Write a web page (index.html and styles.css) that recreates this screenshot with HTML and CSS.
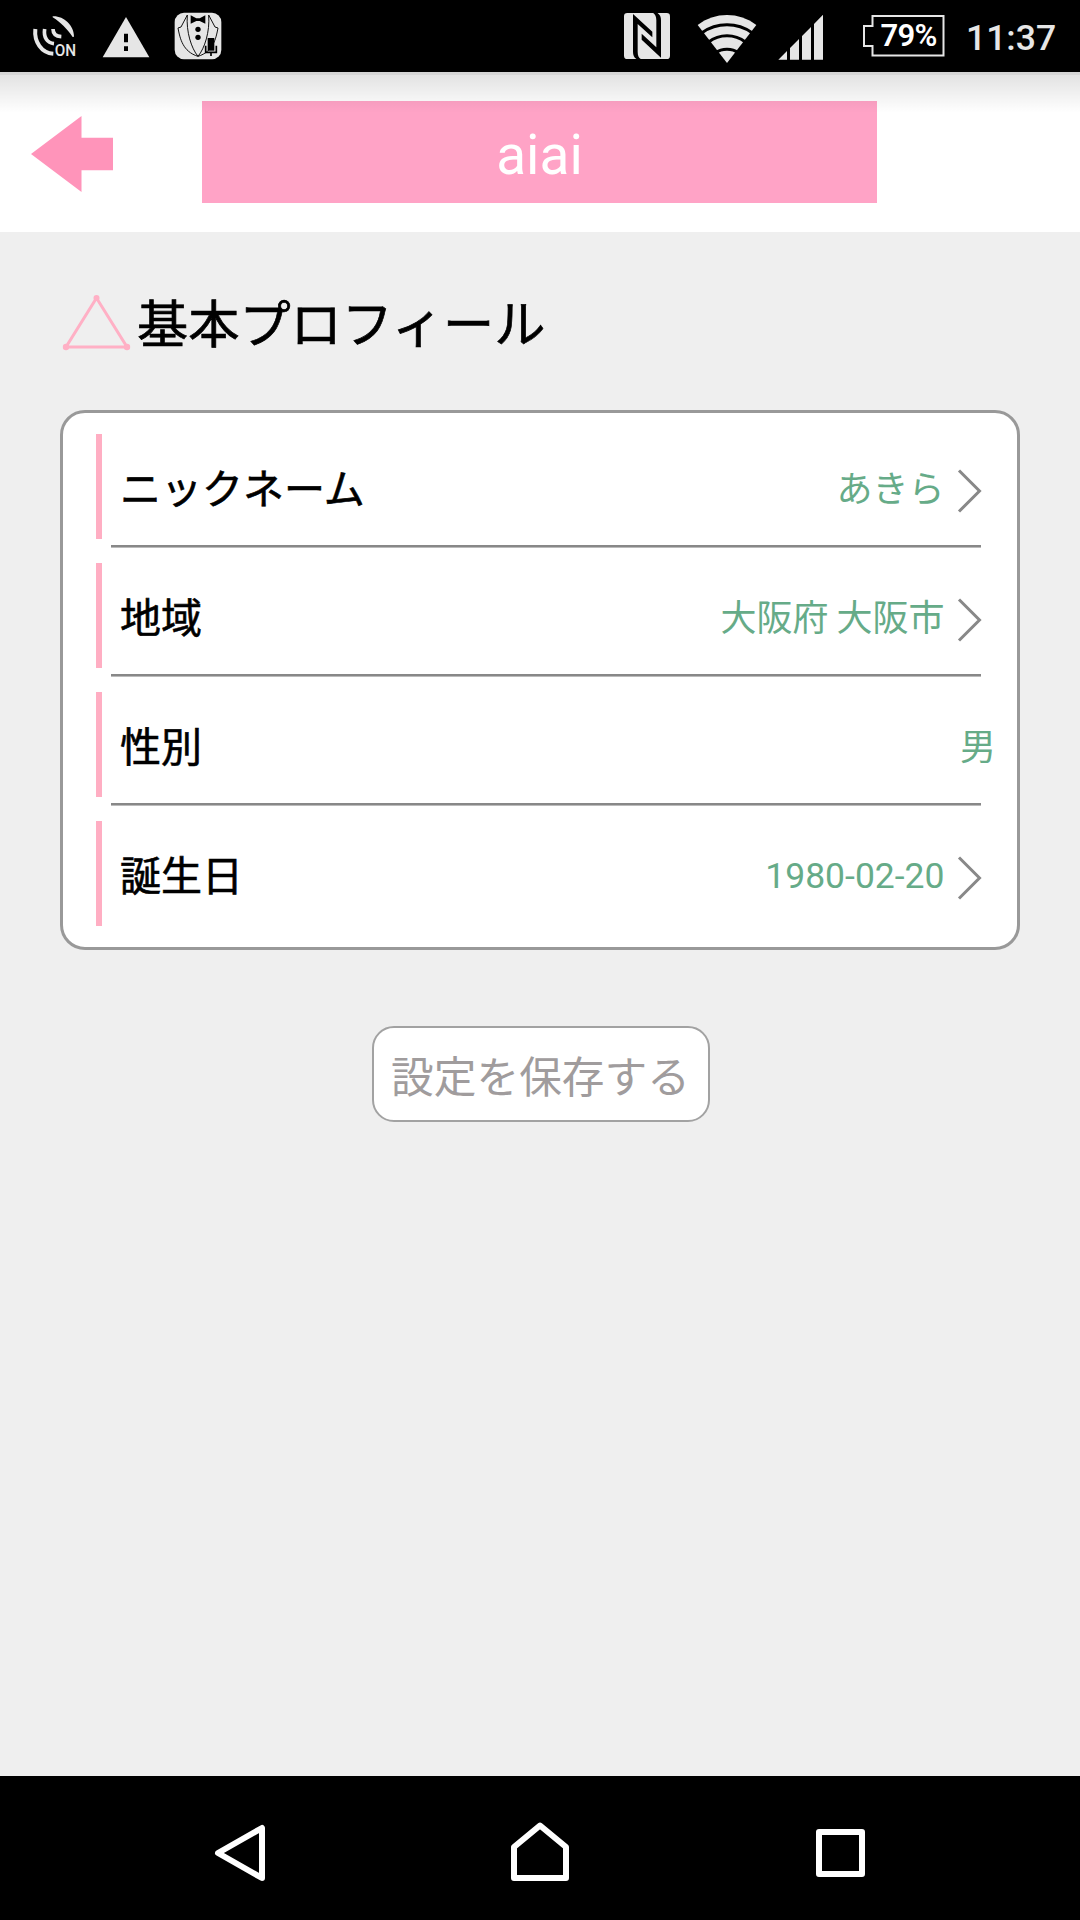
FILE: index.html
```html
<!DOCTYPE html>
<html lang="ja">
<head>
<meta charset="utf-8">
<title>基本プロフィール</title>
<link rel="stylesheet" href="styles.css">
</head>
<body>
<div class="statusbar">
  <div class="status-left">
    <svg class="icon-gps" width="48" height="48" viewBox="96 44 144 144">
      <path d="M158 48C190 46 222 74 222 109L218 110C200 84 184 68 158 51Z" fill="#e6e6e6"/>
      <g fill="none" stroke="#e6e6e6" stroke-width="11">
        <path d="M106 86C102 124 124 158 160 160" stroke-width="12"/>
        <path d="M134 86C130 112 142 128 162 130"/>
        <path d="M159 86C159 100 168 108 184 109"/>
      </g>
      <text class="gps-text" x="164" y="167" textLength="64" lengthAdjust="spacingAndGlyphs">ON</text>
    </svg>
    <svg class="icon-warn" width="48" height="42" viewBox="306 48 144 126">
      <path d="M378 51L448 172H308Z" fill="#e6e6e6"/>
      <path d="M372 101h12v26h-12zM372 139h12v14h-12z" fill="#000"/>
    </svg>
    <svg class="icon-tux" width="48" height="48" viewBox="522 36 144 144">
      <rect x="524" y="38" width="140" height="140" rx="28" fill="#e6e6e6"/>
      <g fill="none" stroke="#111" stroke-width="3">
        <path d="M562 45L543 81L534 84C540 115 548 155 594 169C640 155 648 115 654 84L645 81L626 45"/>
        <path d="M562 45C558 95 574 145 594 169C614 145 630 95 626 45"/>
      </g>
      <path d="M572 46L589 55H599L616 46V71L599 63H589L572 71Z" fill="#000"/>
      <circle cx="594" cy="88" r="8"/><circle cx="594" cy="112" r="8"/>
      <rect x="623" y="114" width="20" height="38"/>
      <path d="M617 137V157H649V137M633 157V168" fill="none" stroke="#000" stroke-width="5"/>
    </svg>
  </div>
  <div class="status-right">
    <svg class="icon-nfc" width="46" height="46" viewBox="27 24 138 138">
      <rect x="27" y="24" width="138" height="138" rx="10" fill="#e6e6e6"/>
      <path d="M54 27L112 80V97L68 57V140C68 153 72 159 79 163H66C57 158 54 150 54 140Z"/>
      <path d="M138 158L80 104V86L124 127V46C124 34 120 27 113 23H126C135 28 138 36 138 46Z"/>
    </svg>
    <svg class="icon-wifi" width="60" height="50" viewBox="291 42 180 150">
      <path d="M293 75C345 35 417 35 469 75L381 189Z" fill="#e6e6e6"/>
      <g fill="none" stroke="#000" stroke-width="9">
        <path d="M306 98C350 66 412 66 456 98"/>
        <path d="M326 126C358 101 404 101 436 126"/>
        <path d="M346 159C366 144 396 144 416 159"/>
      </g>
    </svg>
    <svg class="icon-signal" width="46" height="46" viewBox="534 43 138 138">
      <path d="M535 180L561 154V180ZM570 145L597 118V180H570ZM606 109L633 82V180H606ZM642 73L669 45V180H642Z" fill="#e6e6e6"/>
    </svg>
    <div class="battery">
      <svg width="82" height="42" viewBox="0 0 82 42">
        <path d="M9.500 1H80.500V40.500H9.500V31H1V11H9.500Z" fill="none" stroke="#e6e6e6" stroke-width="2"/>
      </svg>
      <span class="battery-text">79%</span>
    </div>
    <span class="clock">11:37</span>
  </div>
</div>

<header class="header">
  <svg class="back" width="86" height="80" viewBox="29 114 86 80">
    <path d="M31 154L81.500 116V137.700H113V170.300H81.500V192Z" fill="#ff94ba"/>
  </svg>
  <h1 class="title">aiai</h1>
</header>

<main class="main">
  <h2 class="section">
    <svg width="76" height="62" viewBox="61 289 76 62">
      <path d="M96.500 298L66 347H127Z" fill="none" stroke="#ffb0c5" stroke-width="3"/>
      <g fill="#ffb0c5"><circle cx="96.500" cy="298" r="3"/><circle cx="66" cy="347" r="3.200"/><circle cx="127" cy="347" r="3.200"/></g>
    </svg>
    <span>基本プロフィール</span>
  </h2>

  <ul class="card">
    <li class="row">
      <div class="row-body">
        <span class="label">ニックネーム</span>
        <span class="value">あきら</span>
        <svg class="chevron" width="26" height="44" viewBox="0 0 26 44"><path d="M2 1.500L22.500 22L2 42.500" fill="none" stroke="#888" stroke-width="3"/></svg>
      </div>
    </li>
    <li class="row">
      <div class="row-body">
        <span class="label">地域</span>
        <span class="value">大阪府 大阪市</span>
        <svg class="chevron" width="26" height="44" viewBox="0 0 26 44"><path d="M2 1.500L22.500 22L2 42.500" fill="none" stroke="#888" stroke-width="3"/></svg>
      </div>
    </li>
    <li class="row">
      <div class="row-body">
        <span class="label">性別</span>
        <span class="value value-fixed">男</span>
      </div>
    </li>
    <li class="row">
      <div class="row-body">
        <span class="label">誕生日</span>
        <span class="value value-date">1980-02-20</span>
        <svg class="chevron" width="26" height="44" viewBox="0 0 26 44"><path d="M2 1.500L22.500 22L2 42.500" fill="none" stroke="#888" stroke-width="3"/></svg>
      </div>
    </li>
  </ul>

  <button class="save" type="button">設定を保存する</button>
</main>

<nav class="navbar">
  <svg width="60" height="64" viewBox="210 1821 60 64"><path d="M262 1828V1878L218 1853Z"/></svg>
  <svg width="64" height="64" viewBox="509 1821 64 64"><path d="M514 1878V1847L540 1825.500L566 1847V1878Z"/></svg>
  <svg width="56" height="56" viewBox="812 1825 56 56"><path d="M819 1832H862V1874H819Z"/></svg>
</nav>
</body>
</html>
```
FILE: styles.css
```css
* { box-sizing: border-box; margin: 0; padding: 0; }

body {
  width: 1080px;
  height: 1920px;
  display: flex;
  flex-direction: column;
  background: #efefef;
  font-family: "Noto Sans CJK JP", Roboto, sans-serif;
  overflow: hidden;
}

svg { display: block; flex: none; }

/* Status bar */
.statusbar {
  height: 72px;
  flex: none;
  display: flex;
  justify-content: space-between;
  background: #000;
  color: #e6e6e6;
  font-family: Roboto, sans-serif;
}
.status-left, .status-right { display: flex; align-items: flex-start; }
.status-left { padding-left: 32px; }
.icon-gps { margin-top: 15px; overflow: visible; }
.gps-text { font: 500 48px Roboto, sans-serif; fill: #e6e6e6; }
.icon-warn { margin: 16px 0 0 22px; }
.icon-tux { margin: 12px 0 0 24px; }
.status-right { width: 456px; }
.icon-nfc { margin-top: 13px; }
.icon-wifi { margin: 14px 0 0 27px; }
.icon-signal { margin: 14px 0 0 21px; }
.battery { position: relative; margin: 15px 0 0 39px; }
.battery-text {
  position: absolute;
  inset: 0 0 0 9px;
  color: #fff;
  font-size: 31px;
  font-weight: 600;
  letter-spacing: -.7px;
  line-height: 42px;
  text-align: center;
}
.clock { margin-left: 21px; font-size: 35.500px; font-weight: 500; line-height: 76px; }

/* Header */
.header {
  position: relative;
  height: 160px;
  flex: none;
  display: flex;
  padding: 29px 0 0 29px;
  background: #fff;
}
.header::after {
  content: "";
  position: absolute;
  inset: 0 0 auto;
  height: 38px;
  border-top: 3px solid rgba(0, 0, 0, .05);
  background: linear-gradient(rgba(0, 0, 0, .12), transparent) border-box;
}
.back { margin-top: 13px; }
.title {
  width: 675px;
  height: 102px;
  margin-left: 87px;
  padding-top: 4px;
  background: #ffa3c6;
  color: #fff;
  font: 400 55px/101px Roboto, sans-serif;
  text-align: center;
}

/* Profile form */
.main {
  flex: 1;
  display: flex;
  flex-direction: column;
  align-items: center;
  padding: 38px 60px 0;
}
.section {
  align-self: stretch;
  height: 100px;
  display: flex;
  align-items: center;
  padding-left: 1px;
  font-size: 51.200px;
  font-weight: 400;
  -webkit-text-stroke: .7px #000;
  line-height: 100px;
  color: #000;
}
.section span { padding-top: 2px; }
.card {
  width: 960px;
  height: 540px;
  margin-top: 40px;
  padding-top: 6px;
  border: 3px solid #999;
  border-radius: 25px;
  background: #fff;
  list-style: none;
}
.row { height: 129px; padding-top: 15px; }
.row:not(:last-child)::after {
  content: "";
  display: block;
  height: 3px;
  margin: 6px 36px 0 48px;
  background: linear-gradient(#888 66%, #bbb 66%);
}
.row-body {
  display: flex;
  align-items: center;
  height: 105px;
  margin-left: 33px;
  padding: 0 34.500px 0 18px;
  border-left: 6px solid #ffaec3;
}
.label {
  flex: 1;
  padding-bottom: 1px;
  font-size: 41px;
  font-weight: 400;
  -webkit-text-stroke: .6px #000;
  line-height: 102px;
  color: #000;
}
.value {
  padding-bottom: 1px;
  margin-right: 12px;
  font-size: 36px;
  line-height: 102px;
  color: #66ab88;
}
.value-fixed { margin-right: -13.500px; }
.value-date { padding: 4px 0 0; font-family: Roboto, sans-serif; font-size: 35.500px; }
.chevron { margin-top: 8px; }
.save {
  width: 338px;
  height: 96px;
  margin: 76px 0 0 1px;
  border: 2px solid #a2a2a2;
  border-radius: 22px;
  background: #fff;
  color: #a09c9d;
  font: 400 42.700px/92px "Noto Sans CJK JP", sans-serif;
}

/* Navigation bar */
.navbar {
  height: 144px;
  flex: none;
  display: flex;
  justify-content: space-between;
  align-items: center;
  padding: 9px 212px 0 210px;
  background: #000;
}
.navbar svg { fill: none; stroke: #fff; stroke-width: 6px; stroke-linejoin: round; }
```
